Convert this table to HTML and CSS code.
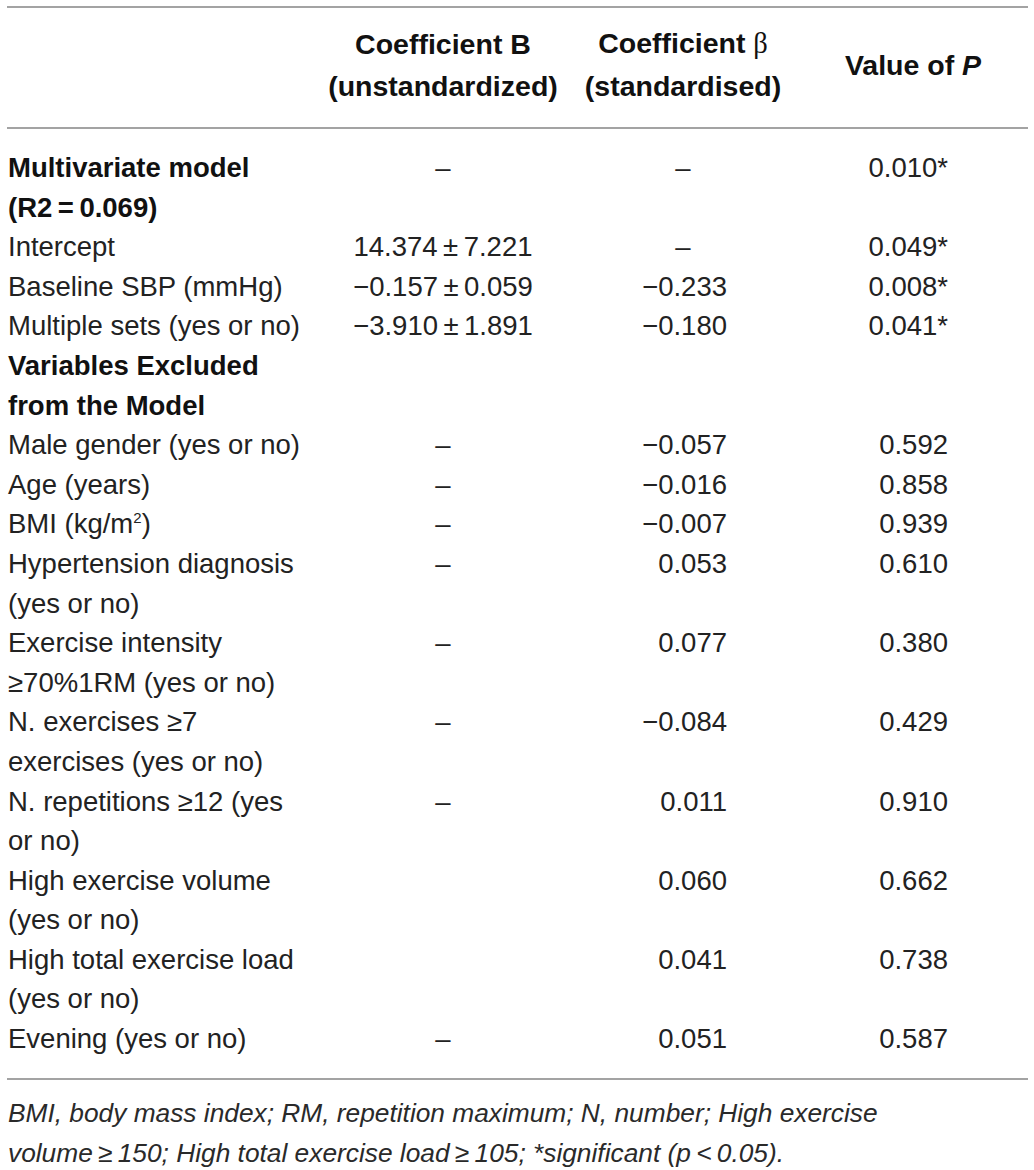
FILE: index.html
```html
<!DOCTYPE html>
<html lang="en">
<head>
<meta charset="utf-8">
<title>Table</title>
<link rel="stylesheet" href="styles.css">
</head>
<body>
<div class="wrap">
  <table class="tbl">
    <colgroup>
      <col class="c1"><col class="c2"><col class="c3"><col class="c4">
    </colgroup>
    <thead>
      <tr>
        <th class="lbl"></th>
        <th>Coefficient B<br>(unstandardized)</th>
        <th>Coefficient <span class="greek">β</span><br>(standardised)</th>
        <th>Value of <i>P</i></th>
      </tr>
    </thead>
    <tbody>
      <tr class="first">
        <td class="lbl"><b>Multivariate model<br>(R2&#8201;=&#8201;0.069)</b></td>
        <td class="ctr">–</td><td class="ctr">–</td><td class="num">0.010*</td>
      </tr>
      <tr>
        <td class="lbl">Intercept</td>
        <td class="ctr">14.374&#8201;±&#8201;7.221</td><td class="ctr">–</td><td class="num">0.049*</td>
      </tr>
      <tr>
        <td class="lbl">Baseline SBP (mmHg)</td>
        <td class="ctr">−0.157&#8201;±&#8201;0.059</td><td class="num3">−0.233</td><td class="num">0.008*</td>
      </tr>
      <tr>
        <td class="lbl">Multiple sets (yes or no)</td>
        <td class="ctr">−3.910&#8201;±&#8201;1.891</td><td class="num3">−0.180</td><td class="num">0.041*</td>
      </tr>
      <tr>
        <td class="lbl"><b>Variables Excluded<br>from the Model</b></td>
        <td></td><td></td><td></td>
      </tr>
      <tr>
        <td class="lbl">Male gender (yes or no)</td>
        <td class="ctr">–</td><td class="num3">−0.057</td><td class="num">0.592</td>
      </tr>
      <tr>
        <td class="lbl">Age (years)</td>
        <td class="ctr">–</td><td class="num3">−0.016</td><td class="num">0.858</td>
      </tr>
      <tr>
        <td class="lbl">BMI (kg/m<sup>2</sup>)</td>
        <td class="ctr">–</td><td class="num3">−0.007</td><td class="num">0.939</td>
      </tr>
      <tr>
        <td class="lbl">Hypertension diagnosis<br>(yes or no)</td>
        <td class="ctr">–</td><td class="num3">0.053</td><td class="num">0.610</td>
      </tr>
      <tr>
        <td class="lbl">Exercise intensity<br>≥70%1RM (yes or no)</td>
        <td class="ctr">–</td><td class="num3">0.077</td><td class="num">0.380</td>
      </tr>
      <tr>
        <td class="lbl">N. exercises ≥7<br>exercises (yes or no)</td>
        <td class="ctr">–</td><td class="num3">−0.084</td><td class="num">0.429</td>
      </tr>
      <tr>
        <td class="lbl">N. repetitions ≥12 (yes<br>or no)</td>
        <td class="ctr">–</td><td class="num3">0.011</td><td class="num">0.910</td>
      </tr>
      <tr>
        <td class="lbl">High exercise volume<br>(yes or no)</td>
        <td></td><td class="num3">0.060</td><td class="num">0.662</td>
      </tr>
      <tr>
        <td class="lbl">High total exercise load<br>(yes or no)</td>
        <td></td><td class="num3">0.041</td><td class="num">0.738</td>
      </tr>
      <tr class="last">
        <td class="lbl">Evening (yes or no)</td>
        <td class="ctr">–</td><td class="num3">0.051</td><td class="num">0.587</td>
      </tr>
    </tbody>
  </table>
  <p class="note">BMI, body mass index; RM, repetition maximum; N, number; High exercise<br>volume&#8201;≥&#8201;150; High total exercise load&#8201;≥&#8201;105; *significant (<span>p</span>&#8201;&lt;&#8201;0.05).</p>
</div>
</body>
</html>
```
FILE: styles.css
```css
html, body {
  margin: 0;
  padding: 0;
  background: #ffffff;
}
body {
  font-family: "Liberation Sans", Arial, sans-serif;
  color: #222222;
}
.wrap {
  padding: 6px 6px 0 7px;
  width: 1021px;
}
.tbl {
  width: 1021px;
  border-collapse: collapse;
  table-layout: fixed;
  border-top: 2px solid #a3a3a3;
  border-bottom: 2px solid #a3a3a3;
  font-size: 27.5px;
}
.c1 { width: 311px; }
.c2 { width: 250px; }
.c3 { width: 230px; }
.c4 { width: 230px; }
thead th {
  font-weight: bold;
  font-size: 28.5px;
  color: #111111;
  text-align: center;
  vertical-align: middle;
  line-height: 42px;
  padding: 14px 0 20px;
  border-bottom: 2px solid #a3a3a3;
  white-space: nowrap;
}
thead th.lbl { text-align: left; }
.greek {
  font-family: "Liberation Serif", "Times New Roman", serif;
  font-weight: normal;
}
tbody td {
  padding: 0;
  line-height: 39.6px;
  vertical-align: top;
  white-space: nowrap;
}
tbody b { color: #111111; }
tbody tr.first td { padding-top: 19px; }
tbody tr.last td { padding-bottom: 19px; }
td.lbl { padding-left: 1px; text-align: left; }
td.ctr { text-align: center; }
td.num3 { text-align: right; padding-right: 71px; }
td.num { text-align: right; padding-right: 80px; }
sup {
  font-size: 15px;
  line-height: 0;
  vertical-align: 10px;
}
.note {
  margin: 13px 0 0 1px;
  font-style: italic;
  font-size: 26.3px;
  line-height: 40px;
  color: #2a2a2a;
  white-space: nowrap;
}
```
